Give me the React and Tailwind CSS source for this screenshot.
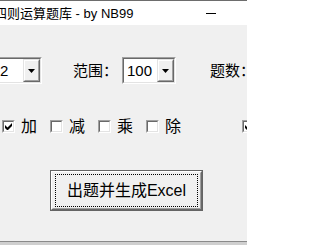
import React from "react";

function Combo({ value, className }) {
  return (
    <div className={"h-[27px] border border-t-[#a0a0a0] border-l-[#a0a0a0] border-r-white border-b-white shrink-0 " + className}>
      <div className="h-full border border-t-[#696969] border-l-[#696969] border-r-[#e3e3e3] border-b-[#e3e3e3] bg-white flex items-center">
        <span className="flex-1 pl-[3px] text-[15px] leading-none text-black">{value}</span>
        <div className="w-[17px] h-full border border-t-[#e3e3e3] border-l-[#e3e3e3] border-r-[#696969] border-b-[#696969] bg-[#f0f0f0]">
          <div className="w-full h-full border border-t-white border-l-white border-r-[#a0a0a0] border-b-[#a0a0a0] flex items-center justify-center">
            <svg width="7" height="4" viewBox="0 0 7 4"><path d="M0 0H7L3.5 4Z" fill="#000" /></svg>
          </div>
        </div>
      </div>
    </div>
  );
}

function Check({ checked, label }) {
  return (
    <div className="w-[48px] shrink-0 flex items-center gap-[6px]">
      <div className="w-[13px] h-[13px] shrink-0 border border-t-[#a0a0a0] border-l-[#a0a0a0] border-r-white border-b-white">
        <div className="w-full h-full border border-t-[#696969] border-l-[#696969] border-r-[#e3e3e3] border-b-[#e3e3e3] bg-white flex items-center justify-center">
          {checked && (
            <svg width="7" height="7" viewBox="0 0 7 7"><path d="M0 2v3l2 2h1l4-4V0L2.5 4.5Z" fill="#000" /></svg>
          )}
        </div>
      </div>
      {label && <span className="text-[16px] leading-none text-black whitespace-nowrap">{label}</span>}
    </div>
  );
}

export default function App() {
  return (
    <div className="w-[247px] h-[245px] overflow-hidden flex flex-col bg-[#f0f0f0] font-['Liberation_Sans','Noto_Sans_CJK_SC',sans-serif]">
      <div className="h-px bg-[#6d6d6d] shrink-0" />
      <div className="h-[24px] bg-white flex items-center shrink-0">
        <span className="-ml-[6px] text-[13px] leading-none whitespace-nowrap text-black">四则运算题库 - by NB99</span>
        <span className="ml-auto mr-[31px] w-[10px] h-px bg-black shrink-0" />
      </div>
      <div className="flex-1 flex flex-col">
        <div className="mt-[32px] flex items-center h-[27px] whitespace-nowrap">
          <Combo value="2" className="-ml-[5px] w-[47px]" />
          <span className="ml-[31px] text-[15px] leading-none text-black">范围：</span>
          <Combo value="100" className="ml-[4px] w-[54px]" />
          <span className="ml-[34px] text-[15px] leading-none text-black">题数：</span>
        </div>
        <div className="mt-[36px] flex items-center h-[13px] pl-[2px]">
          <Check checked label="加" />
          <Check label="减" />
          <Check label="乘" />
          <Check label="除" />
          <div className="w-[48px] shrink-0" />
          <Check checked />
        </div>
        <div className="mt-[37px] ml-[50px] w-[153px] h-[41px] border border-[#646464] shrink-0">
          <div className="w-full h-full border border-t-white border-l-white border-r-[#696969] border-b-[#696969]">
            <div className="w-full h-full border border-t-[#f0f0f0] border-l-[#f0f0f0] border-r-[#a0a0a0] border-b-[#a0a0a0] px-[2px] py-[1px]">
              <div className="w-full h-full border border-dotted border-black flex items-center justify-center">
                <span className="text-[16px] leading-none text-black whitespace-nowrap">出题并生成Excel</span>
              </div>
            </div>
          </div>
        </div>
      </div>
      <div className="h-px bg-[#8a8a8a] shrink-0" />
      <div className="h-[3px] bg-[#cfcfcf] shrink-0" />
    </div>
  );
}
